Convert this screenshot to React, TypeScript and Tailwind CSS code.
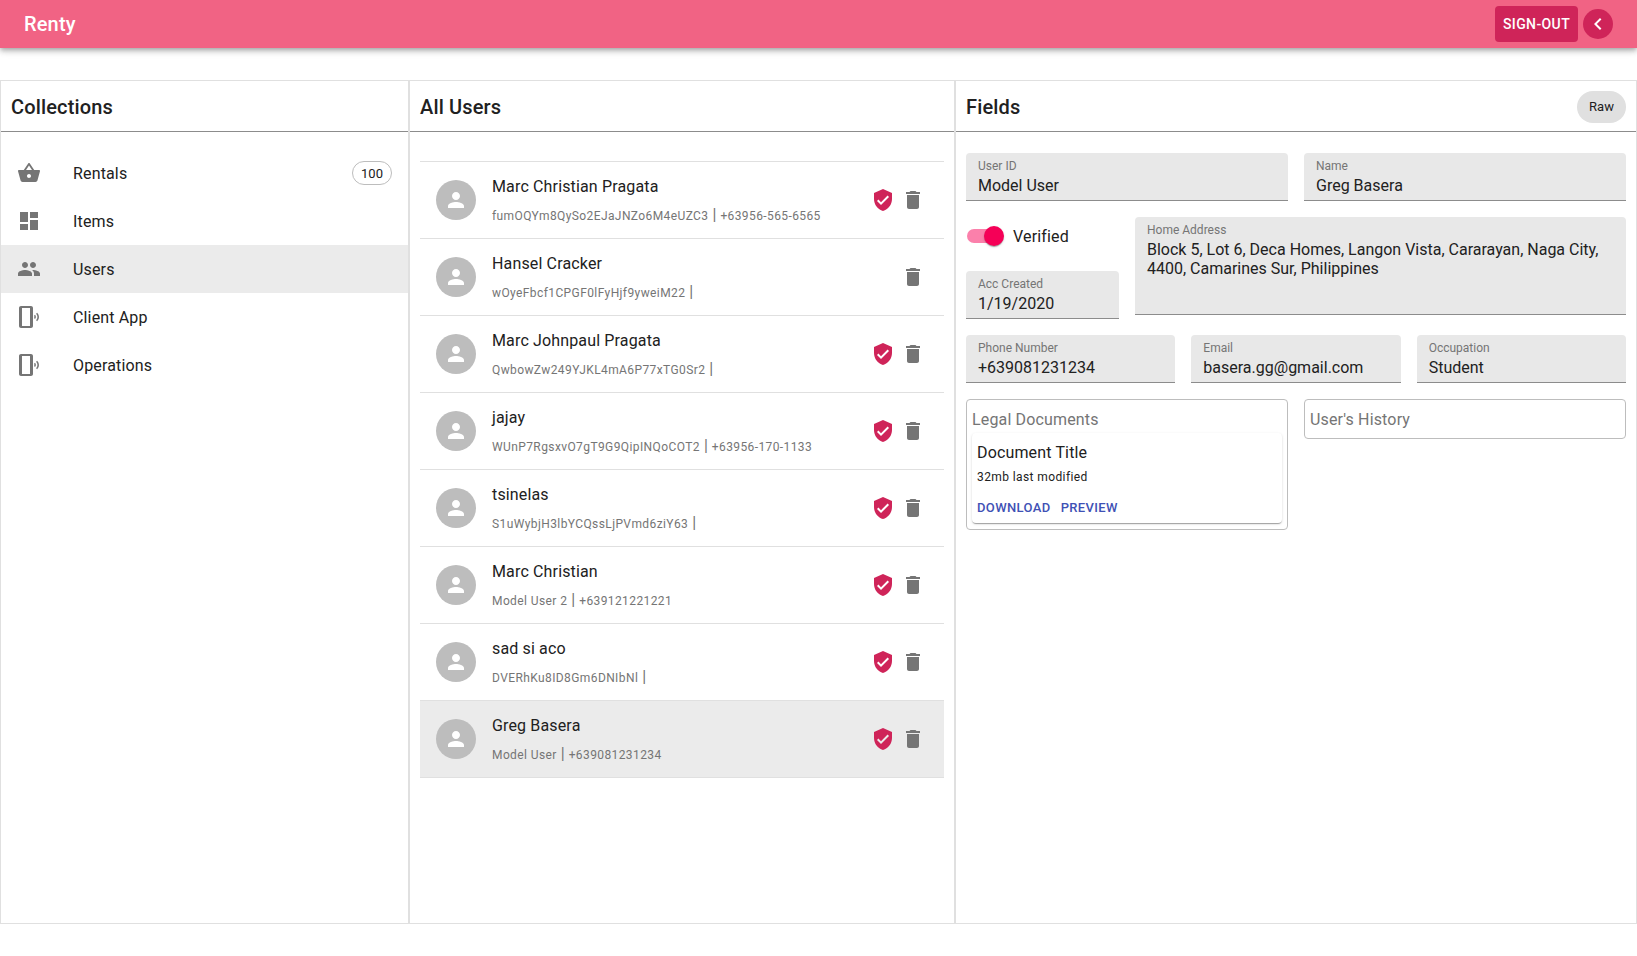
import React from "react";

const P = {
  basket: "M17.21 9l-4.38-6.56c-.19-.28-.51-.42-.83-.42-.32 0-.64.14-.83.43L6.79 9H2c-.55 0-1 .45-1 1 0 .09.01.18.04.27l2.54 9.27c.23.84 1 1.46 1.92 1.46h13c.92 0 1.69-.62 1.93-1.46l2.54-9.27L23 10c0-.55-.45-1-1-1h-4.79zM9 9l3-4.4L15 9H9zm3 8c-1.1 0-2-.9-2-2s.9-2 2-2 2 .9 2 2-.9 2-2 2z",
  dashboard: "M3 13h8V3H3v10zm0 8h8v-6H3v6zm10 0h8V11h-8v10zm0-18v6h8V3h-8z",
  people: "M16 11c1.66 0 2.99-1.34 2.99-3S17.66 5 16 5c-1.66 0-3 1.34-3 3s1.34 3 3 3zm-8 0c1.66 0 2.99-1.34 2.99-3S9.66 5 8 5C6.34 5 5 6.34 5 8s1.34 3 3 3zm0 2c-2.33 0-7 1.17-7 3.5V19h14v-2.5c0-2.33-4.67-3.5-7-3.5zm8 0c-.29 0-.62.02-.97.05 1.16.84 1.97 1.97 1.97 3.45V19h6v-2.5c0-2.33-4.67-3.5-7-3.5z",
  ring: "M20.1 7.7l-1 1c1.8 1.8 1.8 4.6 0 6.5l1 1c2.5-2.3 2.5-6.1 0-8.5zM18 9.8l-1 1c.5.7.5 1.6 0 2.3l1 1c1.2-1.2 1.2-3 0-4.3zM14 1H4c-1.1 0-2 .9-2 2v18c0 1.1.9 2 2 2h10c1.1 0 2-.9 2-2V3c0-1.1-.9-2-2-2zM13 21H5V3h8v18z",
  person: "M12 12c2.21 0 4-1.79 4-4s-1.79-4-4-4-4 1.79-4 4 1.79 4 4 4zm0 2c-2.67 0-8 1.34-8 4v2h16v-2c0-2.66-5.33-4-8-4z",
  del: "M6 19c0 1.1.9 2 2 2h8c1.1 0 2-.9 2-2V7H6v12zM19 4h-3.5l-1-1h-5l-1 1H5v2h14V4z",
  shield: "M12 1L3 5v6c0 5.55 3.84 10.74 9 12 5.16-1.26 9-6.45 9-12V5l-9-4zm-2 16l-4-4 1.41-1.41L10 14.17l6.59-6.59L18 9l-8 8z",
  left: "M15.41 7.41L14 6l-6 6 6 6 1.41-1.41L10.83 12z",
};

function Icon({ d, className }: { d: string; className: string }) {
  return (
    <svg viewBox="0 0 24 24" className={className} fill="currentColor">
      <path d={d} />
    </svg>
  );
}

const nav = [
  { label: "Rentals", icon: P.basket, chip: "100" },
  { label: "Items", icon: P.dashboard },
  { label: "Users", icon: P.people, active: true },
  { label: "Client App", icon: P.ring },
  { label: "Operations", icon: P.ring },
];

const users = [
  { name: "Marc Christian Pragata", id: "fumOQYm8QySo2EJaJNZo6M4eUZC3", phone: "+63956-565-6565", ok: true },
  { name: "Hansel Cracker", id: "wOyeFbcf1CPGF0lFyHjf9yweiM22", phone: "", ok: false },
  { name: "Marc Johnpaul Pragata", id: "QwbowZw249YJKL4mA6P77xTG0Sr2", phone: "", ok: true },
  { name: "jajay", id: "WUnP7RgsxvO7gT9G9QipINQoCOT2", phone: "+63956-170-1133", ok: true },
  { name: "tsinelas", id: "S1uWybjH3lbYCQssLjPVmd6ziY63", phone: "", ok: true },
  { name: "Marc Christian", id: "Model User 2", phone: "+639121221221", ok: true },
  { name: "sad si aco", id: "DVERhKu8ID8Gm6DNIbNl", phone: "", ok: true },
  { name: "Greg Basera", id: "Model User", phone: "+639081231234", ok: true, selected: true },
];

function PanelHead({ title, children }: { title: string; children?: React.ReactNode }) {
  return (
    <div className="h-[51px] shrink-0 border-b border-[#8c8c8c] flex items-center justify-between pl-[10px] pr-[10px]">
      <h2 className="text-[20px] leading-[32px] pt-[2px] font-medium tracking-[0.15px] text-[#212121]">{title}</h2>
      {children}
    </div>
  );
}

function Field({ label, value, className = "" }: { label: string; value: string; className?: string }) {
  return (
    <div className={`h-12 bg-[#e8e8e8] rounded-t border-b border-[#8c8c8c] px-3 pt-[6px] ${className}`}>
      <div className="text-[12px] leading-[14px] text-[#757575]">{label}</div>
      <div className="text-[16px] leading-[19px] mt-[3px] text-[#212121]">{value}</div>
    </div>
  );
}

export default function App() {
  return (
    <div className="min-h-[956px] bg-white [font-family:Roboto,sans-serif]">
      <header className="h-12 bg-[#f16384] flex items-center justify-between pl-6 pr-6 shadow-[0_2px_4px_-1px_rgba(0,0,0,0.2),0_4px_5px_0_rgba(0,0,0,0.14),0_1px_10px_0_rgba(0,0,0,0.12)]">
        <div className="text-[20px] font-medium tracking-[0.15px] text-white">Renty</div>
        <div className="flex items-center gap-[5px]">
          <button className="h-9 w-[83px] rounded bg-[#cf2459] text-white text-[14px] font-medium tracking-[0.4px]">SIGN-OUT</button>
          <button className="h-[30px] w-[30px] rounded-full bg-[#cf2459] text-white flex items-center justify-center">
            <Icon d={P.left} className="w-6 h-6" />
          </button>
        </div>
      </header>

      <main className="mt-8 h-[844px] border border-[#e0e0e0] flex">
        <section className="w-[409px] shrink-0 border-r-2 border-[#e0e0e0] flex flex-col">
          <PanelHead title="Collections" />
          <nav className="pt-[17px]">
            {nav.map((n) => (
              <div key={n.label} className={`h-12 flex items-center pl-4 pr-4 ${n.active ? "bg-[#ebebeb]" : ""}`}>
                <div className="w-14 shrink-0 text-[#757575]">
                  <Icon d={n.icon} className="w-6 h-6" />
                </div>
                <span className="flex-1 pt-[2px] text-[16px] tracking-[0.15px] text-[#212121]">{n.label}</span>
                {n.chip && (
                  <span className="h-6 w-10 pt-[1px] rounded-full border border-[#bdbdbd] flex items-center justify-center text-[13px] text-[#212121]">{n.chip}</span>
                )}
              </div>
            ))}
          </nav>
        </section>

        <section className="w-[546px] shrink-0 border-r-2 border-[#e0e0e0] flex flex-col">
          <PanelHead title="All Users" />
          <div className="pt-[29px] pl-[10px] pr-[10px]">
            <div className="border-b border-[#e0e0e0]">
              {users.map((u) => (
                <div key={u.name} className={`h-[77px] border-t border-[#e0e0e0] flex items-center pl-4 pr-[19px] ${u.selected ? "bg-[#ebebeb]" : ""}`}>
                  <div className="w-10 h-10 rounded-full bg-[#bdbdbd] text-white flex items-center justify-center shrink-0">
                    <Icon d={P.person} className="w-6 h-6" />
                  </div>
                  <div className="flex-1 ml-4">
                    <div className="text-[16px] leading-[26px] tracking-[0.15px] text-[#212121]">{u.name}</div>
                    <div className="text-[12px] leading-[20px] mt-[6px] tracking-[0.4px] text-[#757575]">
                      {u.id}
                      <span className="ml-[4px] mr-[4px] text-[16px] leading-none tracking-normal">|</span>
                      {u.phone}
                    </div>
                  </div>
                  {u.ok && <Icon d={P.shield} className="w-6 h-6 text-[#cf2459] mr-[6px]" />}
                  <Icon d={P.del} className="w-6 h-6 text-[#757575]" />
                </div>
              ))}
            </div>
          </div>
        </section>

        <section className="flex-1 min-w-0 flex flex-col">
          <PanelHead title="Fields">
            <span className="h-8 w-[49px] mt-[2px] rounded-full bg-[#e0e0e0] flex items-center justify-center text-[13px] text-[#212121]">Raw</span>
          </PanelHead>
          <div className="pt-[21px] pl-[10px] pr-[10px] flex flex-col gap-4">
            <div className="grid grid-cols-2 gap-4">
              <Field label="User ID" value="Model User" />
              <Field label="Name" value="Greg Basera" />
            </div>
            <div className="flex gap-4 items-start">
              <div className="w-[153px] shrink-0">
                <div className="h-[38px] flex items-center mb-4">
                  <div className="relative w-[34px] h-[14px] rounded-full bg-[#fb80ab] ml-[1px]">
                    <div className="absolute -right-[3px] -top-[3px] w-5 h-5 rounded-full bg-[#f50057] shadow-[0_2px_1px_-1px_rgba(0,0,0,0.2),0_1px_1px_0_rgba(0,0,0,0.14),0_1px_3px_0_rgba(0,0,0,0.12)]" />
                  </div>
                  <span className="ml-3 pt-[2px] text-[16px] tracking-[0.15px] text-[#212121]">Verified</span>
                </div>
                <Field label="Acc Created" value="1/19/2020" />
              </div>
              <div className="flex-1 h-[98px] bg-[#e8e8e8] rounded-t border-b border-[#8c8c8c] px-3 pt-[6px]">
                <div className="text-[12px] leading-[14px] text-[#757575]">Home Address</div>
                <div className="text-[16px] leading-[19px] mt-[3px] text-[#212121]">Block 5, Lot 6, Deca Homes, Langon Vista, Cararayan, Naga City, 4400, Camarines Sur, Philippines</div>
              </div>
            </div>
            <div className="grid grid-cols-3 gap-4">
              <Field label="Phone Number" value="+639081231234" />
              <Field label="Email" value="basera.gg@gmail.com" />
              <Field label="Occupation" value="Student" />
            </div>
            <div className="grid grid-cols-2 gap-4 items-start">
              <div className="h-[131px] border border-[#bdbdbd] rounded px-[5px] pt-[10px]">
                <div className="text-[16px] leading-[19px] tracking-[0.15px] text-[#757575]">Legal Documents</div>
                <div className="mt-[4px] h-[90px] rounded bg-white px-[5px] pt-[10px] shadow-[0_2px_1px_-1px_rgba(0,0,0,0.2),0_1px_1px_0_rgba(0,0,0,0.14),0_1px_3px_0_rgba(0,0,0,0.12)]">
                  <div className="text-[16px] leading-[20px] tracking-[0.15px] text-[#212121]">Document Title</div>
                  <div className="text-[12px] leading-[16px] mt-[6px] tracking-[0.4px] text-[#212121]">32mb last modified</div>
                  <div className="flex gap-[10px] mt-[15px] text-[13px] leading-[16px] font-medium tracking-[0.37px] text-[#3f51b5]">
                    <span>DOWNLOAD</span>
                    <span>PREVIEW</span>
                  </div>
                </div>
              </div>
              <div className="h-[40px] border border-[#bdbdbd] rounded px-[5px] pt-[10px]">
                <div className="text-[16px] leading-[19px] tracking-[0.15px] text-[#757575]">User's History</div>
              </div>
            </div>
          </div>
        </section>
      </main>
    </div>
  );
}
